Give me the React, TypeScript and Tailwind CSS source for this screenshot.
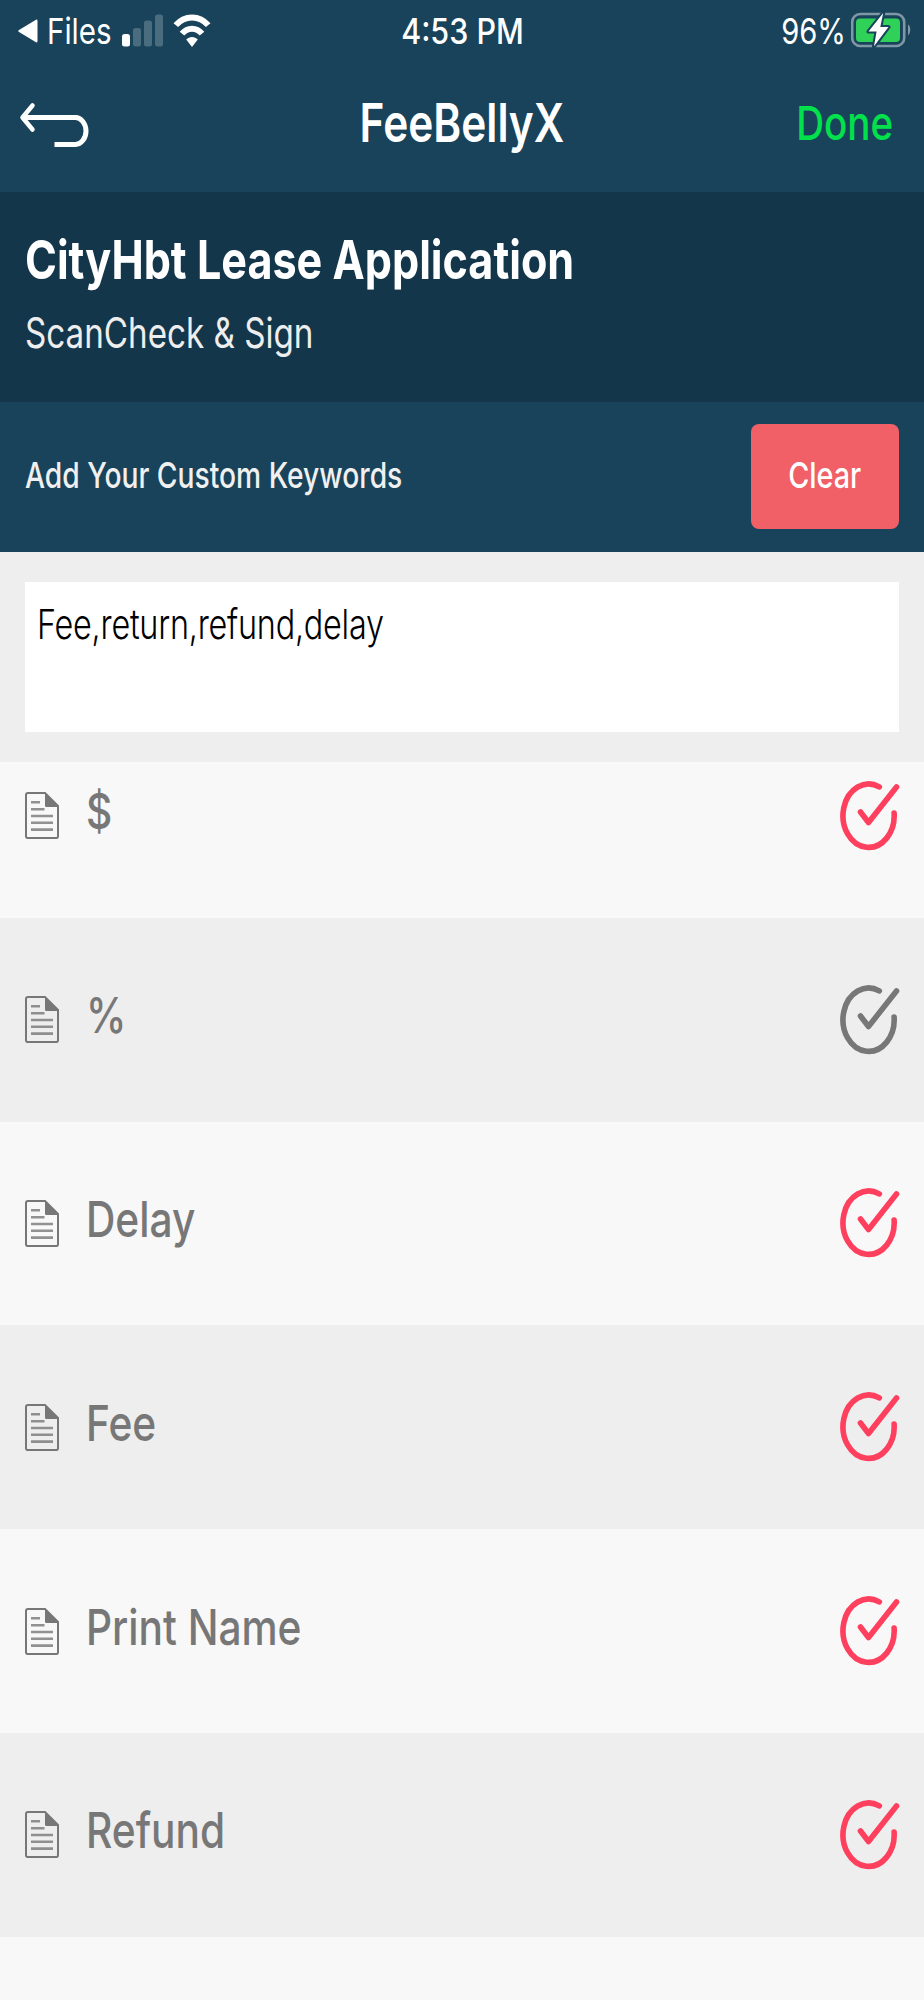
import { useState } from "react";
import clsx from "clsx";

const initialKeywords = [
  { name: "$", selected: true },
  { name: "%", selected: false },
  { name: "Delay", selected: true },
  { name: "Fee", selected: true },
  { name: "Print Name", selected: true },
  { name: "Refund", selected: true },
];

function SignalIcon() {
  return (
    <svg width="42" height="34" viewBox="0 0 42 34" fill="white">
      <rect x="0" y="20" width="8" height="12.5" rx="2.5" />
      <rect x="11" y="14" width="8" height="18.5" rx="2.5" fillOpacity="0.22" />
      <rect x="22" y="6.5" width="8" height="26" rx="2.5" fillOpacity="0.22" />
      <rect x="33" y="0.5" width="8" height="32" rx="2.5" fillOpacity="0.22" />
    </svg>
  );
}

function WifiIcon() {
  return (
    <svg width="38" height="34" viewBox="0 0 38 34" fill="none">
      <path d="M2.8 11.2C11.5 0.8 26.5 0.8 35.2 11.2" stroke="white" strokeWidth="6" />
      <path d="M9 19.6C14.5 13 23.5 13 29 19.6" stroke="white" strokeWidth="6" />
      <path d="M13.2 25.5C16.5 22 21.5 22 24.8 25.5L19 33Z" fill="white" />
    </svg>
  );
}

function BatteryIcon() {
  return (
    <svg width="60" height="38" viewBox="0 0 60 38" fill="none">
      <rect x="1.2" y="3" width="52" height="32" rx="8" stroke="white" strokeOpacity="0.45" strokeWidth="2.6" />
      <path d="M57 13.5C60 15 60 22 57 24.5Z" fill="white" fillOpacity="0.45" />
      <rect x="5" y="7.5" width="44" height="23.5" rx="4" fill="#30d158" />
      <path
        d="M32.2 2L17.5 20.6H25.6L23 35.2L37.5 16H29.3Z"
        fill="white"
        stroke="#18435b"
        strokeWidth="4"
        strokeLinejoin="round"
        paintOrder="stroke"
      />
    </svg>
  );
}

function BackIcon() {
  return (
    <svg width="70" height="46" viewBox="0 0 70 46" fill="none" stroke="white">
      <path d="M13.5 3.5L3.5 15.5L13.5 27.5" strokeWidth="4.5" strokeLinecap="round" strokeLinejoin="round" />
      <path d="M4.5 15.5H56.5C62 15.5 67 21.5 67 29C67 36.5 62 42.5 56.5 42.5H35.5" strokeWidth="5" />
    </svg>
  );
}

function DocumentIcon() {
  return (
    <svg width="34" height="47" viewBox="0 0 34 47" fill="none" stroke="#777777">
      <path d="M3 1H20L33 14V44Q33 46 31.5 46H2.5Q1 46 1 44V3Q1 1 3 1Z" strokeWidth="2" />
      <path d="M20 1L33 14V15H21.5Q20 15 20 13.5Z" fill="#777777" stroke="none" />
      <path d="M6 10.3H15M6 17.2H19.5M6 24H28M6 30.8H28M6 37.6H28" strokeWidth="2.6" strokeOpacity="0.8" />
    </svg>
  );
}

function CheckIcon({ selected }: { selected: boolean }) {
  return (
    <svg
      width="60"
      height="70"
      viewBox="0 0 60 70"
      fill="none"
      strokeWidth="5.6"
      strokeLinecap="round"
      strokeLinejoin="round"
      className={selected ? "stroke-[#ff3f5e]" : "stroke-[#777777]"}
    >
      <path d="M39.3 5.9A25.6 31.7 0 1 0 54.1 32" />
      <path d="M20.5 31L28.5 41.5L56.5 6" />
    </svg>
  );
}

export default function App() {
  const [text, setText] = useState("Fee,return,refund,delay");
  const [keywords, setKeywords] = useState(initialKeywords);

  const toggle = (name: string) =>
    setKeywords((prev) => prev.map((k) => (k.name === name ? { ...k, selected: !k.selected } : k)));

  return (
    <div className="flex h-[2000px] w-[924px] flex-col overflow-hidden bg-[#f8f8f8] font-['Inter','Liberation_Sans',sans-serif] whitespace-nowrap">
      <header className="h-[192px] shrink-0 bg-[#18435b] text-white">
        {/* status bar */}
        <div className="grid h-[62px] grid-cols-[1fr_auto_1fr] items-center px-[13px]">
          <div className="flex items-center pl-[5px]">
            <svg width="20" height="24" viewBox="0 0 20 24" fill="white">
              <path d="M1 11L18 0.8Q19.5 0 19.5 2V22Q19.5 24 18 23.2L1 13Q-0.5 12 1 11Z" />
            </svg>
            <span className="ml-[9px] w-[75px] origin-left scale-x-[0.82] text-[36px]">Files</span>
            <SignalIcon />
            <span className="ml-[9px]">
              <WifiIcon />
            </span>
          </div>
          <span className="scale-x-[0.87] text-[35px] font-medium">4:53 PM</span>
          <div className="flex items-center justify-end">
            <span className="origin-right scale-x-[0.81] text-[36px]">96%</span>
            <span className="ml-[5px] -mt-[3px]">
              <BatteryIcon />
            </span>
          </div>
        </div>

        {/* nav bar */}
        <nav className="grid h-[122px] grid-cols-[1fr_auto_1fr] items-center px-[19px]">
          <button type="button" aria-label="Back" className="mt-[4px] justify-self-start">
            <BackIcon />
          </button>
          <h1 className="scale-x-[0.8] pt-[2px] text-[53px] font-semibold">FeeBellyX</h1>
          <button
            type="button"
            className="mr-[12px] origin-right scale-x-[0.82] justify-self-end text-[47px] font-medium text-[#00e14c]"
          >
            Done
          </button>
        </nav>
      </header>

      <section className="flex h-[210px] shrink-0 flex-col items-start gap-[13px] bg-[#14364b] pt-9 pl-[25px]">
        <h2 className="origin-left scale-x-[0.799] text-[54px] leading-[64px] font-bold text-white">
          CityHbt Lease Application
        </h2>
        <p className="origin-left scale-x-[0.79] text-[42px] leading-[56px] text-[#eeeeee]">ScanCheck & Sign</p>
      </section>

      <section className="flex h-[149.5px] shrink-0 items-center justify-between bg-[#18435b] px-[25px]">
        <p className="origin-left scale-x-[0.784] pb-[3px] text-[36px] font-medium text-[#f0f0f0]">
          Add Your Custom Keywords
        </p>
        <button
          type="button"
          onClick={() => setText("")}
          className="flex h-[105px] w-[148px] items-center justify-center rounded-lg bg-[#f16067] pb-[3px] text-[36px] font-medium text-white"
        >
          <span className="scale-x-[0.8]">Clear</span>
        </button>
      </section>

      <section className="h-[210.5px] shrink-0 bg-[#eeeeee] px-[25px] pt-[30.5px]">
        <div className="h-[150px] bg-white pt-[17px] pl-[12px]">
          <p className="w-max origin-left scale-x-[0.79] text-[41px] leading-[50px] font-light tracking-[-0.3px] text-black">
            {text}
          </p>
        </div>
      </section>

      {/* list is scrolled a little under the text box */}
      <div className="min-h-0 flex-1 overflow-hidden">
        <ul className="-mt-[48px]">
          {keywords.map((keyword, i) => (
            <li
              key={keyword.name}
              onClick={() => toggle(keyword.name)}
              className={clsx(
                "flex h-[203.8px] items-center pr-[24px] pl-[25px]",
                i % 2 === 0 ? "bg-[#f8f8f8]" : "bg-[#eeeeee]",
              )}
            >
              <DocumentIcon />
              <span className="ml-[27px] origin-left scale-x-[0.813] pb-[8px] text-[50px] font-medium text-[#777777]">
                {keyword.name}
              </span>
              <span className="ml-auto">
                <CheckIcon selected={keyword.selected} />
              </span>
            </li>
          ))}
        </ul>
      </div>
    </div>
  );
}
